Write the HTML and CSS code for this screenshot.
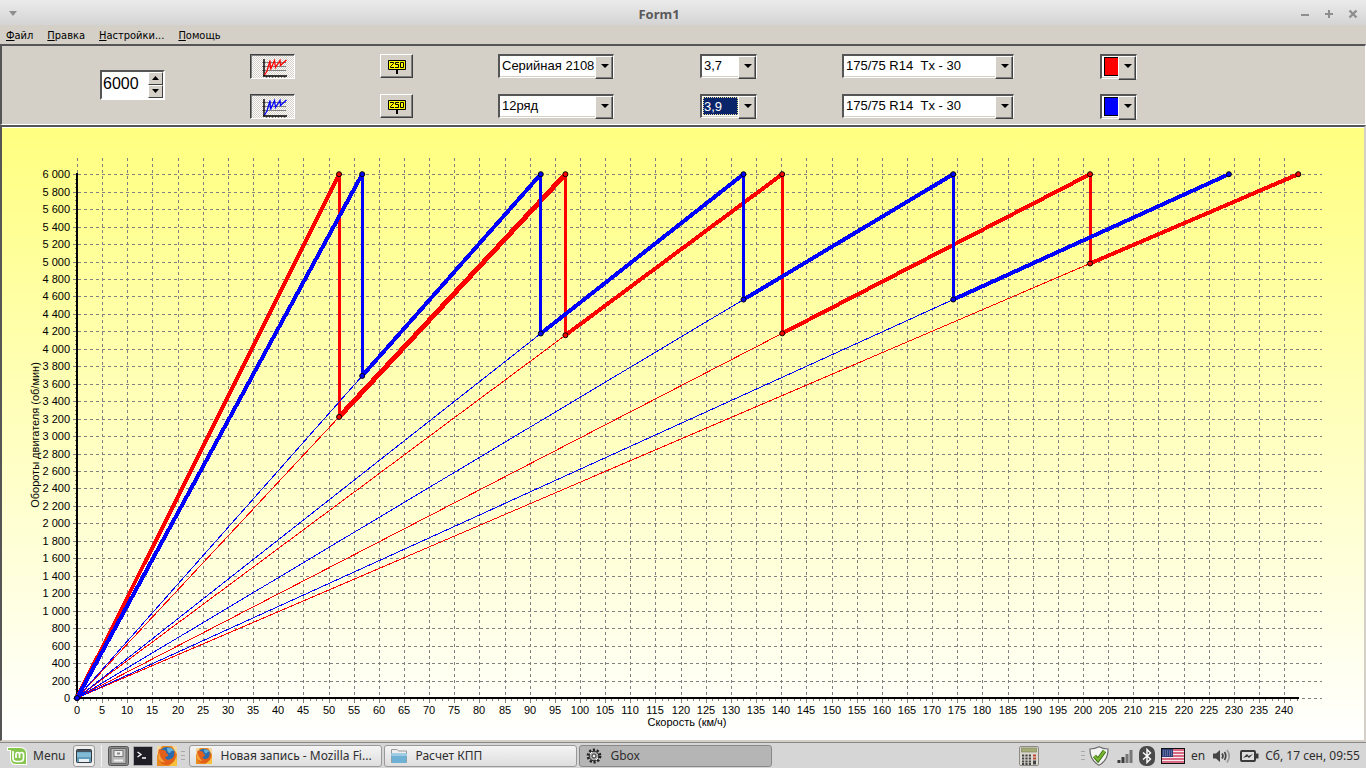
FILE: index.html
```html
<!DOCTYPE html>
<html lang="ru">
<head>
<meta charset="utf-8">
<title>Form1</title>
<link rel="stylesheet" href="styles.css">
</head>
<body>
<header class="titlebar">
  <button class="wm" aria-label="Меню окна"><svg width="10" height="6" viewBox="0 0 10 6"><path d="M1 0H9L5 5Z" fill="#8e8e8e"/></svg></button>
  <h1 class="title">Form1</h1>
  <div class="wm-group">
    <button class="wm" aria-label="Свернуть"><svg width="10" height="10" viewBox="0 0 10 10"><path d="M1 6H9" stroke="#8e8e8e" stroke-width="2"/></svg></button>
    <button class="wm" aria-label="Развернуть"><svg width="10" height="10" viewBox="0 0 10 10"><path d="M1 5H9M5 1V9" stroke="#8e8e8e" stroke-width="2"/></svg></button>
    <button class="wm" aria-label="Закрыть"><svg width="10" height="10" viewBox="0 0 10 10"><path d="M1.5 1.5L8.5 8.5M8.5 1.5L1.5 8.5" stroke="#8e8e8e" stroke-width="2.4"/></svg></button>
  </div>
</header>

<nav class="menubar">
  <button class="menu-item"><u>Ф</u>айл</button>
  <button class="menu-item"><u>П</u>равка</button>
  <button class="menu-item"><u>Н</u>астройки...</button>
  <button class="menu-item"><u>П</u>омощь</button>
</nav>

<svg width="0" height="0" class="defs" aria-hidden="true">
  <symbol id="plot" viewBox="0 0 26 20">
    <path d="M1 4.5H25M1 8.5H25M1 12.5H25" stroke="#808080" fill="none"/>
    <path d="M5.5 18V21M8.5 18V20M11.5 18V20M14.5 18V20M17.5 18V20M20.5 18V20M23.5 18V20" stroke="#808080"/>
    <path d="M3 1V18.5M2 18H26" stroke="#000" stroke-width="1.4" fill="none"/>
    <path d="M3.500 17L6 13L9 2.500L9.500 11.500L13.500 2.500L14.500 9.500L19 2.500L19.500 7.500L25.500 2" stroke="currentColor" stroke-width="1.3" fill="none"/>
  </symbol>
  <symbol id="sign" viewBox="0 0 18 15">
    <path d="M.5.5H17.500V9.500H.5Z" fill="#ff0" stroke="#000"/>
    <path d="M9 10V14" stroke="#000" stroke-width="2"/>
    <path d="M2 2.500H5.500V3.500L2.500 6.500V7.500H6M11 2.500H7.500V4.500H10.500V7.500H7M12.500 2.500H15.500V7.500H12.500Z" fill="none" stroke="#000"/>
  </symbol>
  <symbol id="fox" viewBox="0 0 20 20">
    <rect width="20" height="20" fill="#e98a1e"/>
    <path d="M0 0H5L2 5L0 10ZM15 0H20V8Z" fill="#f5d9a0"/>
    <circle cx="10" cy="9.500" r="8.500" fill="#2b6cae"/>
    <path d="M10 2Q15 1 17 5Q14 4 13 7Q10 7 10 2Z" fill="#63b0dd"/>
    <path d="M2 3Q4 4 7 4Q10 5 9 7Q12 8 11 10Q9 10 8 12Q10 15 14 13Q18 11 17 5Q21 11 17 16Q12 21 5 18Q-1 13 2 3Z" fill="#e2601a"/>
    <path d="M14 18Q19 15 19 9Q20 12 20 20H12Z" fill="#f7c13c"/>
    <path d="M2 5Q3 13 8 16Q3 17 1 12Z" fill="#f6a53a"/>
  </symbol>
</svg>

<form class="toolbar">
  <div class="spin">
    <input class="spin-value" type="text" inputmode="numeric" value="6000" aria-label="Обороты">
    <div class="spin-buttons">
      <button type="button" class="spin-btn" aria-label="Больше"><svg width="7" height="4" viewBox="0 0 7 4"><path d="M0 4L3.500 0L7 4Z"/></svg></button>
      <button type="button" class="spin-btn" aria-label="Меньше"><svg width="7" height="4" viewBox="0 0 7 4"><path d="M0 0L3.500 4L7 0Z"/></svg></button>
    </div>
  </div>

  <button type="button" class="toggle red" aria-pressed="true" aria-label="График 1"><svg width="26" height="20"><use href="#plot"/></svg></button>
  <button type="button" class="push" aria-label="Метки 1"><svg width="18" height="15"><use href="#sign"/></svg></button>
  <div class="combo gearbox"><select aria-label="Ряд 1"><option>Серийная 2108</option><option>12ряд</option></select></div>
  <div class="combo ratio"><select aria-label="Главная пара 1"><option>3,7</option><option>3,9</option></select></div>
  <div class="combo tyre"><select aria-label="Шины 1"><option>175/75 R14 &nbsp;Tx - 30</option></select></div>
  <div class="combo colour red"><select aria-label="Цвет 1"><option value="red" label=" "></option></select></div>

  <button type="button" class="toggle blue" aria-pressed="true" aria-label="График 2"><svg width="26" height="20"><use href="#plot"/></svg></button>
  <button type="button" class="push" aria-label="Метки 2"><svg width="18" height="15"><use href="#sign"/></svg></button>
  <div class="combo gearbox"><select aria-label="Ряд 2"><option>12ряд</option><option>Серийная 2108</option></select></div>
  <div class="combo ratio focused"><select aria-label="Главная пара 2"><option>3,9</option><option>3,7</option></select></div>
  <div class="combo tyre"><select aria-label="Шины 2"><option>175/75 R14 &nbsp;Tx - 30</option></select></div>
  <div class="combo colour blue"><select aria-label="Цвет 2"><option value="blue" label=" "></option></select></div>
</form>

<main class="chart-panel">
  <svg id="chart" class="chart" viewBox="2 128 1362 612" role="img" aria-label="Обороты двигателя и скорость"></svg>
</main>

<footer class="taskbar">
  <button class="start">
    <svg width="20" height="20" viewBox="0 0 20 20"><path d="M0 1H13Q20 1 20 8V19H9Q3 19 3 13V5H0Z" fill="#fff"/><path d="M1 2H13Q19 2 19 8V18H9Q4 18 4 13V4H1Z" fill="#86c64c"/><path d="M6 5V12Q6 15.500 9.500 15.500H13Q16.500 15.500 16.500 12V8.500Q16.500 6.500 14.500 6.500Q12.500 6.500 12.500 8.500V12M12.500 8.500Q12.500 6.500 10.700 6.500Q9 6.500 9 8.500V12" fill="none" stroke="#fff" stroke-width="1.700"/></svg>
    <span>Menu</span>
  </button>
  <button class="desk" aria-label="Рабочий стол"><svg width="16" height="14" viewBox="0 0 16 14"><rect x=".5" y=".5" width="15" height="13" rx="1" fill="#5f9dbb" stroke="#333a40"/><path d="M1 1H15V3H1Z" fill="#46535c"/><path d="M1 3.500H15V8H1Z" fill="#83bbd6"/><path d="M3 10H13V13H3Z" fill="#e9eff2"/></svg></button>
  <span class="divider"></span>
  <div class="launchers">
    <button aria-label="Файлы"><svg width="21" height="20" viewBox="0 0 21 20"><rect x=".5" y=".5" width="20" height="19" rx="2" fill="#8b8b8b" stroke="#555"/><rect x="3" y="2.500" width="15" height="15" fill="#b7b7b7" stroke="#666"/><rect x="6" y="4.500" width="9" height="6" fill="#eee" stroke="#777"/><path d="M6 14.500H15" stroke="#eee" stroke-width="2"/><rect x="9" y="6.500" width="3" height="2" fill="#888"/></svg></button>
    <button aria-label="Терминал"><svg width="20" height="20" viewBox="0 0 20 20"><rect x=".5" y=".5" width="19" height="19" rx="1" fill="#1f1e26" stroke="#aaa"/><path d="M4.500 6L8 8.500L4.500 11M9 12H13" stroke="#fff" stroke-width="1.300" fill="none"/></svg></button>
    <button aria-label="Firefox"><svg width="20" height="20"><use href="#fox"/></svg></button>
  </div>
  <span class="grip"></span>
  <div class="tasks">
    <button class="task"><svg width="16" height="16"><use href="#fox"/></svg><span>Новая запись - Mozilla Fi...</span></button>
    <button class="task"><svg width="16" height="14" viewBox="0 0 16 14"><path d="M.5 13.500V.5H6L7.500 2H15.500V13.500Z" fill="#eee" stroke="#999"/><path d="M0 4.500H16L15 14H1Z" fill="#6fb1d4"/><path d="M0 4.500H16V7H.3Z" fill="#9ccbe3"/></svg><span>Расчет КПП</span></button>
    <button class="task active"><svg width="16" height="16" viewBox="0 0 16 16"><circle cx="8" cy="8" r="6.200" fill="none" stroke="#222" stroke-width="2.400" stroke-dasharray="2.200 1.700"/><circle cx="8" cy="8" r="4.800" fill="#aaa" stroke="#222"/><circle cx="8" cy="8" r="2" fill="#eee" stroke="#333"/><path d="M4 6L6 4M10 12L12 10" stroke="#fff"/></svg><span>Gbox</span></button>
  </div>
  <button class="calc" aria-label="Калькулятор"><svg width="20" height="20" viewBox="0 0 20 20"><rect x=".5" y=".5" width="19" height="19" rx="1.500" fill="#dcd9d2" stroke="#8d8a84"/><rect x="2.500" y="2" width="15" height="4" fill="#a5ad76" stroke="#777c55" stroke-width=".6"/><path d="M3 9.500H13M3 12.500H13M3 15.500H13M3 18H13" stroke="#444" stroke-width="2" stroke-dasharray="2.200 1.200"/><path d="M14 9.500H17M14 12.500H17" stroke="#bb4a34" stroke-width="2"/><path d="M14 16.500H17" stroke="#444" stroke-width="4"/></svg></button>
  <span class="grip"></span>
  <div class="tray">
    <svg class="shield" width="20" height="20" viewBox="0 0 20 20"><path d="M10 .8Q14 3 19 3Q19.500 14 10 19.300Q.5 14 1 3Q6 3 10 .8Z" fill="#f4f4f2" stroke="#6d6d6d" stroke-width="1.200"/><path d="M5.500 10L9 14L15.500 5" fill="none" stroke="#3a6b12" stroke-width="4"/><path d="M5.500 10L9 14L15.500 5" fill="none" stroke="#79b833" stroke-width="2.200"/></svg>
    <svg width="16" height="14" viewBox="0 0 16 14"><path d="M2 14V11M6 14V8" stroke="#3c3c3c" stroke-width="3"/><path d="M10 14V5M14 14V1" stroke="#777" stroke-width="3"/></svg>
    <svg width="16" height="20" viewBox="0 0 16 20"><rect width="16" height="20" rx="7" fill="#4a4a4a"/><path d="M4 6.500L11.500 13L8 16.500V3.500L11.500 7L4 13.500" fill="none" stroke="#fff" stroke-width="1.400"/></svg>
    <svg width="24" height="16" viewBox="0 0 24 16"><rect width="24" height="16" fill="#f5e9ec"/><path d="M1 2H23M1 5H23M1 8H23M1 11H23M1 14H23" stroke="#cf4060" stroke-width="1.500"/><rect x="1" y="1" width="11" height="8" fill="#2f3f78"/><path d="M2 3H12M2 5H12M2 7H12" stroke="#aab2d4" stroke-width=".8" stroke-dasharray="1 1"/><rect x=".5" y=".5" width="23" height="15" fill="none" stroke="#111"/></svg>
    <span class="lang">en</span>
    <svg class="sound" width="19" height="14" viewBox="0 0 19 14"><path d="M0 4.500H3L7 1V13L3 9.500H0Z" fill="#444"/><path d="M9 4.500Q11 7 9 9.500M11.500 3Q14 7 11.500 11" fill="none" stroke="#444" stroke-width="1.700"/><path d="M14 1Q18.500 7 14 13.500" fill="none" stroke="#999" stroke-width="1.700"/></svg>
    <svg width="19" height="12" viewBox="0 0 19 12"><rect x="1" y="1" width="14" height="10" rx="1" fill="#ddd" stroke="#3a3a3a" stroke-width="2"/><path d="M16 3.500H18.500V8.500H16Z" fill="#3a3a3a"/><path d="M3 8L7 4L8.500 6L13 4L9 8L7.500 6.500Z" fill="#333"/></svg>
    <time class="clock">Сб, 17 сен, 09:55</time>
  </div>
</footer>
<script src="chart.js"></script>
</body>
</html>
```

FILE: styles.css
```css
* { box-sizing: border-box; }

body {
  margin: 0;
  min-height: 100vh;
  display: flex;
  flex-direction: column;
  background: #d4d0c8;
  color: #000;
  font-family: "Liberation Sans", sans-serif;
}

button {
  margin: 0;
  padding: 0;
  border: 0;
  background: none;
  color: inherit;
  font: inherit;
}

svg { display: block; flex: none; }
.defs { position: absolute; }
.red { color: #f00; }
.blue { color: #00f; }

/* window frame */
.titlebar {
  display: flex;
  align-items: center;
  height: 25px;
  padding: 2px 8px 0;
  background: linear-gradient(#ebebeb, #d4d4d4);
}
.title {
  flex: 1;
  margin: 0;
  text-align: center;
  font: bold 13px/20px "Noto Sans", sans-serif;
  color: #5a5a5a;
}
.wm-group { display: flex; gap: 14px; }

.menubar {
  display: flex;
  gap: 14px;
  height: 19px;
  padding: 3px 6px 0;
}
.menu-item { font: 11px/16px "DejaVu Sans Condensed", "DejaVu Sans", sans-serif; }

/* toolbar */
.toolbar {
  display: grid;
  grid-template-columns: 150fr 130fr 118fr 202fr 142fr 258fr 265fr;
  grid-template-rows: 25px 25px;
  row-gap: 15px;
  justify-items: start;
  align-items: start;
  height: 81px;
  margin: 0;
  padding: 8px 0 0 98px;
  border-style: solid;
  border-width: 2px 1px 1px 2px;
  border-color: #555 #fff #fff #555;
}

.spin {
  grid-row: 1 / 3;
  align-self: center;
  display: flex;
  width: 65px;
  height: 30px;
  margin-bottom: 4px;
  background: #fff;
  border: 2px solid;
  border-color: #555 #fff #fff #555;
}
.spin-value {
  flex: 1;
  min-width: 0;
  padding: 0 0 2px 1px;
  border: 0;
  outline: 0;
  background: none;
  font: 16px/20px "Liberation Sans", sans-serif;
}
.spin-buttons { display: flex; flex-direction: column; width: 15px; }
.spin-btn {
  flex: 1;
  display: grid;
  place-items: center;
  background: #d4d0c8;
  border: 1px solid;
  border-color: #fff #404040 #404040 #fff;
}

.toggle, .push { display: grid; place-items: center; }
.toggle {
  width: 45px;
  height: 25px;
  background: repeating-conic-gradient(#fff 0 25%, #d4d0c8 0 50%) 0 0 / 2px 2px;
  border: 1px solid;
  border-color: #404040 #fff #fff #404040;
  box-shadow: inset 1px 1px #808080;
  padding: 2px 0 0 3px;
}
.push {
  width: 33px;
  height: 24px;
  padding-top: 2px;
  background: #d4d0c8;
  border: 1px solid;
  border-color: #fff #404040 #404040 #fff;
  box-shadow: inset -1px -1px #808080;
}

.combo {
  position: relative;
  height: 24px;
  background: #fff;
  border-style: solid;
  border-width: 2px 1px 1px 2px;
  border-color: #555 #fff #fff #555;
  box-shadow: inset -1px -1px #d4d0c8;
}
.combo select {
  appearance: none;
  display: block;
  width: 100%;
  height: 20px;
  padding: 0 15px 0 2px;
  border: 0;
  border-radius: 0;
  outline: 0;
  background: transparent;
  color: #000;
  font: 13px/20px "Liberation Sans", sans-serif;
}
.combo::before {
  content: "";
  position: absolute;
  top: 0;
  right: 0;
  width: 16px;
  height: 21px;
  background: #d4d0c8;
  border: 1px solid;
  border-color: #fff #404040 #404040 #fff;
  box-shadow: inset -1px -1px #808080;
  pointer-events: none;
}
.combo::after {
  content: "";
  position: absolute;
  top: 8px;
  right: 4px;
  border: 4px solid transparent;
  border-top-color: #000;
  border-bottom: 0;
  pointer-events: none;
}
.gearbox { width: 116px; }
.ratio { width: 57px; }
.tyre { width: 172px; }
.colour { width: 37px; height: 25px; padding: 1px 0 1px 2px; }
.colour select {
  width: 16px;
  height: 19px;
  padding: 0;
  border: 1px solid #000;
}
.colour.red select { background: #f00; }
.colour.blue select { background: #00f; }
.colour::before { height: 22px; }
.focused { padding: 1px; }
.focused select {
  width: 35px;
  height: 18px;
  padding: 0 0 0 1px;
  background: #0a246a;
  color: #fff;
  outline: 1px dotted #e8d890;
  outline-offset: -1px;
}

/* chart */
.chart-panel {
  flex: 1;
  margin-bottom: 1px;
  border-style: solid;
  border-width: 2px 2px 1px;
  border-color: #555 #d4d0c8 #d4d0c8 #555;
  background: linear-gradient(#ffff80, #fff);
  box-shadow: inset 0 1px #fff;
  padding-top: 1px;
}
.chart {
  width: 100%;
  height: auto;
  font: 11px "Liberation Sans", sans-serif;
}
.grid { stroke: #808080; stroke-dasharray: 3 3; }
.tick { stroke: #808080; }
.axis { stroke: #000; stroke-width: 2; }
.grid, .tick, .axis, .ray, .gear, .drop { fill: none; shape-rendering: crispEdges; }
.ray { stroke: currentColor; }
.gear { stroke: currentColor; stroke-width: 4; }
.gear.wide { stroke-width: 5; }
.drop { stroke: currentColor; stroke-width: 3; }
.dot { fill: currentColor; stroke: #000; }
.label-x, .title-axis { text-anchor: middle; }
.label-y { text-anchor: end; }

/* taskbar */
.taskbar {
  display: flex;
  align-items: center;
  height: 26px;
  padding: 0 6px 0 7px;
  background: #d6d6d6;
  border-top: 1px solid #888;
  color: #2e2e2e;
  font: 12px/20px "Noto Sans", sans-serif;
}
.start { display: flex; align-items: center; gap: 6px; }
.desk {
  display: grid;
  place-items: center;
  width: 22px;
  height: 22px;
  margin-left: 8px;
  border: 1px solid #999;
  border-radius: 3px;
  background: #eee;
}
.divider { width: 1px; height: 22px; margin: 0 6px; background: #f4f4f4; }
.launchers { display: flex; gap: 4px; }
.grip {
  width: 4px;
  height: 9px;
  margin: 0 4px;
  background: repeating-linear-gradient(#aaa 0 1px, transparent 1px 4px);
}
.tasks { flex: 1; display: flex; gap: 2px; min-width: 0; }
.task {
  flex: 0 1 193px;
  min-width: 0;
  height: 22px;
  display: flex;
  align-items: center;
  gap: 8px;
  padding: 0 6px;
  border: 1px solid #999;
  border-radius: 3px;
  background: linear-gradient(#f4f4f4, #dedede);
  white-space: nowrap;
  overflow: hidden;
}
.active { background: #b5b5b5; border-color: #888; }
.calc { margin-right: 38px; }
.tray { display: flex; align-items: center; gap: 6px; }
.shield { margin-right: 2px; }
.sound { margin: 0 2px; }
.clock { white-space: nowrap; }
```

FILE: chart.js
```js
const NS = "http://www.w3.org/2000/svg";
const chart = document.getElementById("chart");
const MAX_RPM = 6000;
const ORIGIN_X = 77;
const ORIGIN_Y = 698;
const px = (speed) => ORIGIN_X + speed * 5.03;
const py = (rpm) => ORIGIN_Y - rpm * 0.0873;

function add(name, attrs, text) {
  const node = document.createElementNS(NS, name);
  for (const key in attrs) node.setAttribute(key, attrs[key]);
  if (text) node.textContent = text;
  chart.appendChild(node);
}

function path(cls, d) {
  add("path", { class: cls, d });
}

// top speed in each gear at MAX_RPM; wide is the gear drawn with a heavier line
const series = [
  { color: "red", speeds: [52.1, 97.1, 140.2, 201.4, 242.8], wide: 1 },
  { color: "blue", speeds: [56.7, 92.2, 132.5, 174.2, 229] },
];

for (let rpm = 0; rpm <= MAX_RPM; rpm += 50) {
  const y = Math.round(py(rpm)) + 0.5;
  if (rpm % 200) {
    path("tick", `M75 ${y}H76`);
  } else {
    path("tick", `M73 ${y}H77`);
    path("grid", `M78 ${y}H1322`);
    const label = rpm >= 1000 ? `${Math.floor(rpm / 1000)} ${String(rpm % 1000).padStart(3, "0")}` : String(rpm);
    add("text", { class: "label-y", x: 70, y: Math.round(py(rpm)) + 4 }, label);
  }
}

for (let speed = 0; speed <= 242.5; speed += 1.25) {
  const x = Math.round(px(speed)) + 0.5;
  if (speed % 5) {
    path("tick", `M${x} 699V701`);
  } else {
    path("tick", `M${x} 699V703`);
    path("grid", `M${x} 158V697`);
    add("text", { class: "label-x", x: Math.round(px(speed)), y: 714 }, String(speed));
  }
}

path("axis", `M${ORIGIN_X} 173V699M76 698H1299`);

add("text", { class: "title-axis", x: 687, y: 726 }, "Скорость (км/ч)");
add("text", { class: "title-axis", transform: "translate(39 435) rotate(-90)" }, "Обороты двигателя (об/мин)");

for (const { color, speeds, wide } of series) {
  const points = [[ORIGIN_X, ORIGIN_Y]];
  speeds.forEach((speed, i) => {
    const x = px(speed);
    const top = py(MAX_RPM);
    const [fromX, fromY] = points[points.length - 1];
    if (i > 0) path(`ray ${color}`, `M${ORIGIN_X} ${ORIGIN_Y}L${fromX} ${fromY}`);
    path(`gear ${color}${i === wide ? " wide" : ""}`, `M${fromX} ${fromY}L${x} ${top}`);
    points.push([x, top]);
    if (i < speeds.length - 1) {
      const low = py((MAX_RPM * speed) / speeds[i + 1]);
      path(`drop ${color}`, `M${x} ${top}V${low}`);
      points.push([x, low]);
    }
  });
  for (const [cx, cy] of points) add("circle", { class: `dot ${color}`, cx, cy, r: 2.5 });
}
```
